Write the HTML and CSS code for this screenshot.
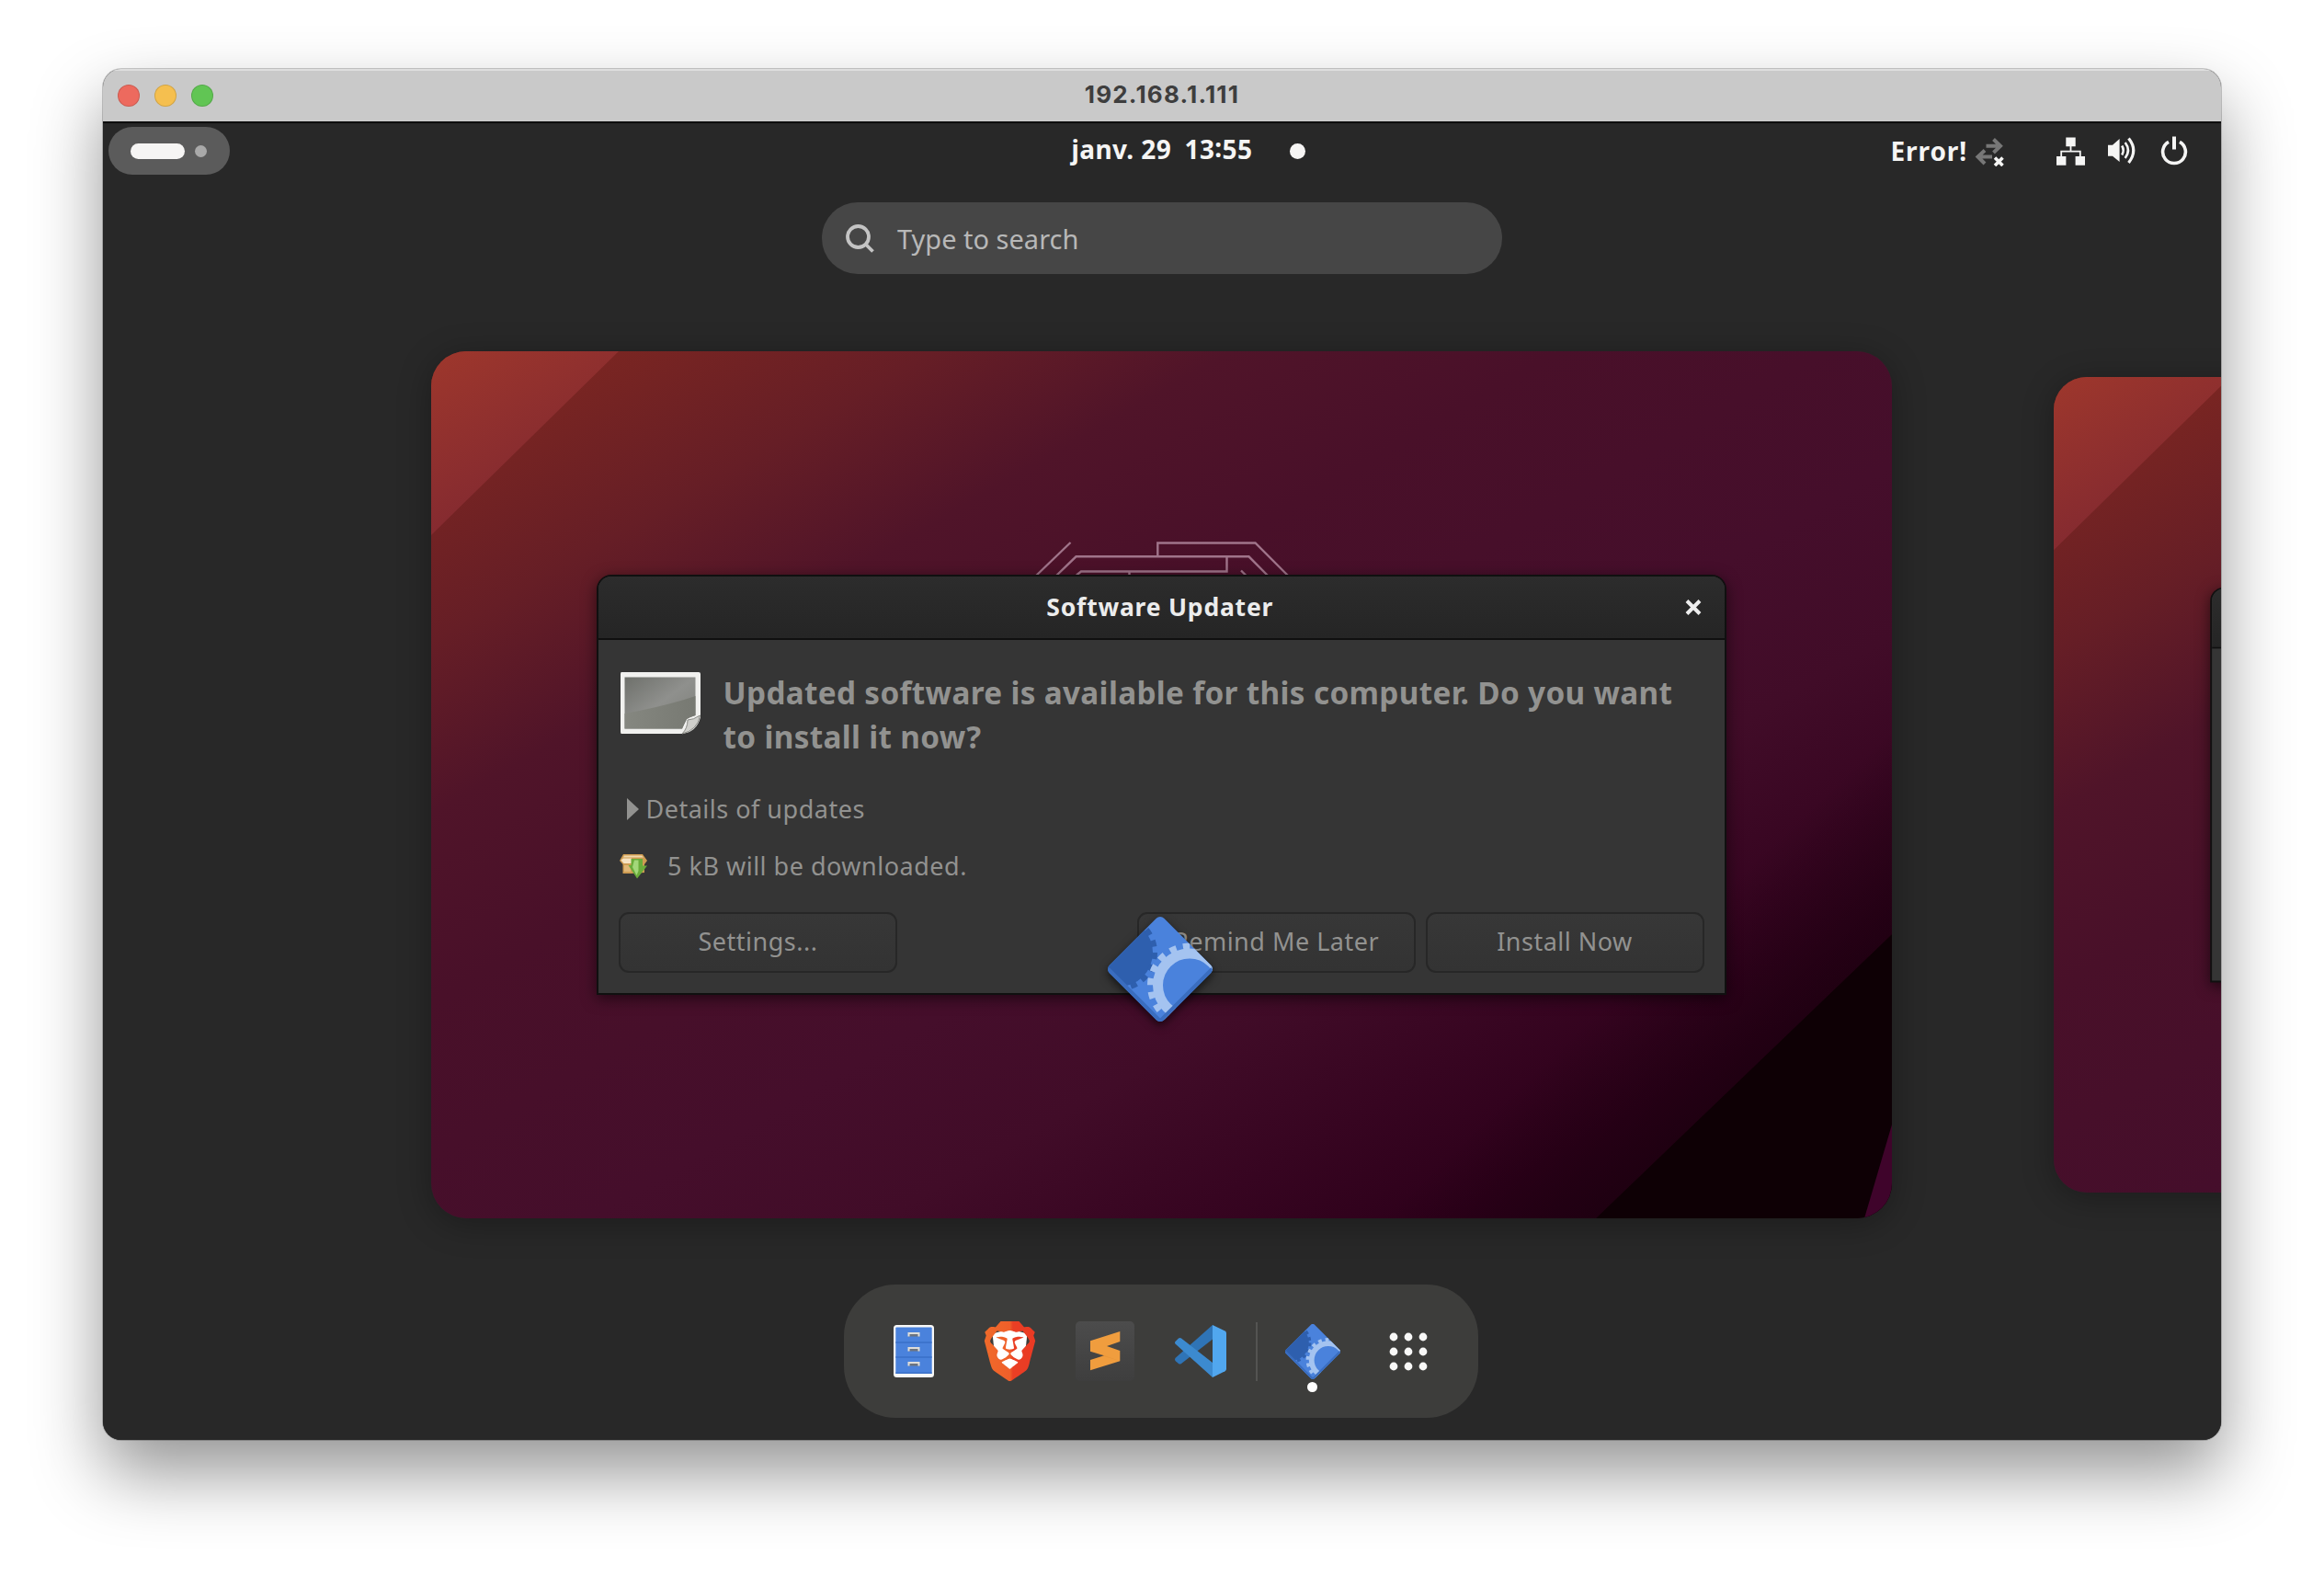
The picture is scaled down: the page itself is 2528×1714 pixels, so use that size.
FILE: index.html
```html
<!DOCTYPE html>
<html lang="fr">
<head>
<meta charset="utf-8">
<title>192.168.1.111</title>
<link rel="stylesheet" href="styles.css">
</head>
<body>
<svg class="defs" width="0" height="0" aria-hidden="true">
  <defs>
    <linearGradient id="wall" gradientUnits="userSpaceOnUse" x1="0" y1="0" x2="805" y2="1395">
      <stop offset="0" stop-color="#83291f"/>
      <stop offset=".065" stop-color="#792522"/>
      <stop offset=".17" stop-color="#661e26"/>
      <stop offset=".27" stop-color="#501429"/>
      <stop offset=".38" stop-color="#491029"/>
      <stop offset=".56" stop-color="#450e2b"/>
      <stop offset=".66" stop-color="#410c28"/>
      <stop offset=".76" stop-color="#370521"/>
      <stop offset=".85" stop-color="#2d001a"/>
      <stop offset="1" stop-color="#1c0010"/>
    </linearGradient>
    <linearGradient id="corner" gradientUnits="userSpaceOnUse" x1="0" y1="0" x2="90" y2="156">
      <stop offset="0" stop-color="#9e372c"/>
      <stop offset="1" stop-color="#842a30"/>
    </linearGradient>
    <linearGradient id="dusk" gradientUnits="userSpaceOnUse" x1="1316" y1="673" x2="1428" y2="790">
      <stop offset="0" stop-color="#1a000e" stop-opacity="0"/>
      <stop offset="1" stop-color="#1a000e" stop-opacity=".65"/>
    </linearGradient>
    <symbol id="wallpaper" viewBox="0 0 1589 943">
      <rect width="1589" height="943" fill="url(#wall)"/>
      <path d="M0 0H204L0 200Z" fill="url(#corner)"/>
      <path d="M1589 380V634L1267 943H1000Z" fill="url(#dusk)"/>
      <path d="M1589 634L1267 943H1589Z" fill="#0e0005"/>
      <path d="M1589 841V943H1559Z" fill="#3f042b"/>
      <g fill="none" stroke="#a0748a" stroke-width="2.4">
        <path d="M656 246L695.500 208"/>
        <path d="M678 246L701.500 223.300H889.500L912 246"/>
        <path d="M790.300 223V208.500H896.500L934 246"/>
        <path d="M702 243.500L707 239.500H865.500V224"/>
        <path d="M759.500 240v4M881 238.500l8 8"/>
      </g>
    </symbol>
    <clipPath id="diamond"><rect x="15" y="15" width="84" height="84" rx="6" transform="rotate(45 57 57)"/></clipPath>
    <symbol id="updater" viewBox="0 0 114 114">
      <g clip-path="url(#diamond)">
        <rect width="114" height="114" fill="#4a82dc"/>
        <circle cx="12" cy="39" r="37" fill="#2e5fae"/>
        <circle cx="12" cy="39" r="39" fill="none" stroke="#2e5fae" stroke-width="6" stroke-dasharray="7 6.600"/>
        <circle cx="89" cy="74.500" r="34.500" fill="none" stroke="#a4c3f0" stroke-width="11"/>
        <circle cx="89" cy="74.500" r="42.500" fill="none" stroke="#a4c3f0" stroke-width="7" stroke-dasharray="7.400 7.430"/>
        <path d="M0 57L57 114L114 57" fill="none" stroke="#3a6dbf" stroke-width="5"/>
      </g>
    </symbol>
  </defs>
</svg>

<div class="window">
  <header class="titlebar">
    <div class="lights"><i class="light red"></i><i class="light yellow"></i><i class="light green"></i></div>
    <span class="host">192.168.1.111</span>
  </header>

  <main class="screen">
    <nav class="panel">
      <div class="activities"><i class="bar"></i><i class="spot"></i></div>
      <div class="clock"><span class="time">janv. 29&ensp;13<span class="colon">:</span>55</span><i class="unread"></i></div>
      <div class="status">
        <span class="error">Error!</span>
        <svg class="ic-sync" width="33" height="33" viewBox="0 0 33 33">
          <g fill="none" stroke="#777" stroke-width="4"><path d="M12.500 10.800H27M20.500 3.500L28 10.800L20.500 18"/><path d="M19 22.500H5M11 15.500L3.500 22.500L11 30"/></g>
          <path d="M22 23.500l8.500 8.500M30.500 23.500L22 32" stroke="#f5f5f4" stroke-width="3.600" fill="none"/>
        </svg>
        <svg class="ic-net" width="31" height="31" viewBox="0 0 31 31">
          <path d="M10.300 .5h10.400v9.800H10.300zM0 21h10.400v9.800H0zM20.600 21H31v9.800H20.600z" fill="#f5f5f4"/>
          <path d="M15.500 10v5M5.200 21v-5.300h20.600V21" fill="none" stroke="#f5f5f4" stroke-width="1.800"/>
        </svg>
        <svg class="ic-vol" width="31" height="31" viewBox="0 0 31 31">
          <path d="M0 8.700h5L12.600 2v25L5 20.700H0z" fill="#f5f5f4"/>
          <g fill="none" stroke="#f5f5f4"><path d="M15.200 9.500q3 5 0 10" stroke-width="2.600"/><path d="M18.700 6q6.500 8.500 0 17" stroke-width="2.600"/><path d="M22.500 1.500q10.500 13 0 26.500" stroke-width="3.200"/></g>
        </svg>
        <svg class="ic-power" width="30" height="32" viewBox="0 0 30 32">
          <path d="M9 6.300A12.400 12.400 0 1 0 21 6.300" fill="none" stroke="#f5f5f4" stroke-width="3.600"/>
          <path d="M15 .5v14" stroke="#f5f5f4" stroke-width="4"/>
        </svg>
      </div>
    </nav>

    <div class="search">
      <svg width="32" height="32" viewBox="0 0 32 32" fill="none" stroke="#c4c4c4" stroke-width="3.800"><circle cx="13.500" cy="13.500" r="11.500"/><path d="M21.500 21.500L29.500 29.500"/></svg>
      <span>Type to search</span>
    </div>

    <section class="workspaces">
      <div class="workspace">
        <svg class="wallpaper" width="1589" height="943"><use href="#wallpaper"/></svg>
        <article class="dialog">
          <header class="dialog-head">
            <span class="dialog-title">Software Updater</span>
            <svg class="close" width="18" height="17" viewBox="0 0 18 17"><path d="M2 1.500L16 15.500M16 1.500L2 15.500" stroke="#eee" stroke-width="4"/></svg>
          </header>
          <div class="dialog-body">
            <div class="lead">
              <svg width="90" height="70" viewBox="0 0 90 70">
                <defs>
                  <linearGradient id="photo" x1="0" y1="0" x2="1" y2="1"><stop offset="0" stop-color="#6e706b"/><stop offset=".5" stop-color="#8f908d"/><stop offset="1" stop-color="#7c7e78"/></linearGradient>
                  <linearGradient id="shade" x1="0" y1="0" x2="1" y2="0"><stop offset="0" stop-color="#858780"/><stop offset="1" stop-color="#777972"/></linearGradient>
                </defs>
                <path d="M2 1H86Q88 1 88 3V50Q84 66 68 68H2Q1 68 1 66V3Q1 1 2 1Z" fill="#f1f1ef"/>
                <path d="M5.500 6.500H82.500V48Q76 50 73 52Q70 58 68 62.500H5.500Z" fill="url(#photo)"/>
                <path d="M5.500 46Q50 38 82.500 27V48Q76 50 73 52Q70 58 68 62.500H5.500Z" fill="url(#shade)"/>
                <path d="M74 53Q80 53 87.500 48Q85 64 68 68Q74 62 74 53Z" fill="#cfcfcb" stroke="#8a8b86" stroke-width="1"/>
              </svg>
              <h1>Updated software is available for this computer. Do you want<br>to install it now?</h1>
            </div>
            <div class="details"><i class="arrow"></i><span>Details of updates</span></div>
            <div class="download">
              <svg width="32" height="28" viewBox="0 0 32 28">
                <path d="M5 1H26L31 8L28 12V21L14 22H4.500V12L1 8Z" fill="#cf9c52"/>
                <path d="M6 2.500H25L27 4.500H5Z" fill="#f0d7ac"/><path d="M2.500 7.500L5 5.500H14V11H5.500Z" fill="#f5e2c2"/><path d="M6 13H13V20H6Z" fill="#dfb676"/>
                <path d="M13.500 6H26V13.500H31L20 27.500L10.500 13H13.500Z" fill="#6aac3b"/><path d="M17 7.500H21.500V19L19.500 24L15 15Z" fill="#a3d77a"/>
              </svg>
              <span>5 kB will be downloaded.</span>
            </div>
            <div class="actions">
              <button>Settings...</button>
              <span class="grow"></span>
              <button>Remind Me Later</button>
              <button>Install Now</button>
            </div>
          </div>
        </article>
        <svg class="app-badge" width="114" height="114"><use href="#updater"/></svg>
      </div>
      <div class="workspace next">
        <svg class="wallpaper" width="1589" height="943"><use href="#wallpaper"/></svg>
        <article class="dialog"><header class="dialog-head"></header></article>
      </div>
    </section>

    <footer class="dock">
      <div class="app">
        <svg width="44" height="57" viewBox="0 0 44 57">
          <rect width="44" height="57" rx="3.500" fill="#f8f8f7"/>
          <rect x="2.300" y="2.500" width="39.400" height="50.500" rx="1" fill="#4a82dc"/>
          <path d="M2.300 19h39.400M2.300 35h39.400M2.300 52.300h39.400" stroke="#3a70c8" stroke-width="1.500"/>
          <path d="M16 8.500H28V12.500H16ZM16 24.500H28V28.500H16ZM16 40.500H28V44.500H16Z" fill="#6c7480"/>
          <path d="M16.500 12.500V9H27.500V12.500M16.500 28.500V25H27.500V28.500M16.500 44.500V41H27.500V44.500" fill="none" stroke="#deddda" stroke-width="2"/>
        </svg>
      </div>
      <div class="app">
        <svg width="65" height="65" viewBox="0 0 24 24">
          <defs><linearGradient id="lion"><stop offset="0" stop-color="#f06a2a"/><stop offset=".5" stop-color="#ef5f2a"/><stop offset=".56" stop-color="#ea3f24"/><stop offset="1" stop-color="#ea3a24"/></linearGradient></defs>
          <path d="M5 5L12 3L19 5L18 14L12 20L6 14Z" fill="#fff"/>
          <path fill="url(#lion)" d="M15.680 0l2.096 2.380s1.840-.512 2.709.358c.868.870 1.584 1.638 1.584 1.638l-.562 1.381.715 2.047s-2.104 7.980-2.350 8.955c-.486 1.919-.818 2.660-2.198 3.633-1.380.972-3.884 2.660-4.293 2.916-.409.256-.920.692-1.380.692-.460 0-.970-.436-1.380-.692a185.796 185.796 0 01-4.293-2.916c-1.380-.973-1.712-1.714-2.197-3.633-.247-.975-2.351-8.955-2.351-8.955l.715-2.047-.562-1.381s.716-.768 1.585-1.638c.868-.870 2.708-.358 2.708-.358L8.321 0h7.360zm-3.679 14.936c-.140 0-1.038.317-1.758.690-.720.373-1.242.637-1.409.742-.167.104-.065.301.087.409.152.107 2.194 1.690 2.393 1.866.198.175.489.464.687.464.198 0 .490-.290.688-.464.198-.175 2.240-1.759 2.392-1.866.152-.108.254-.305.087-.410-.167-.104-.689-.368-1.410-.741-.720-.373-1.617-.690-1.757-.690zm0-11.278s-.409.001-1.022.206-1.278.460-1.584.460c-.307 0-2.581-.434-2.581-.434S4.119 7.152 4.119 7.849c0 .697.339.881.680 1.243l2.020 2.149c.192.203.590.511.356 1.066-.235.555-.580 1.260-.196 1.977.384.716 1.042 1.194 1.464 1.115.421-.080 1.412-.598 1.776-.834.364-.237 1.518-1.190 1.518-1.554 0-.365-1.193-1.020-1.413-1.168-.220-.150-1.226-.725-1.247-.950-.020-.227-.012-.293.284-.851.297-.559.831-1.304.742-1.800-.089-.495-.950-.753-1.565-.986-.615-.232-1.799-.671-1.947-.740-.148-.068-.110-.133.339-.175.448-.043 1.719-.212 2.292-.052.573.160 1.552.403 1.632.532.079.130.149.134.067.579-.081.445-.500 2.581-.541 2.960-.040.380-.120.630.288.724.409.094 1.097.256 1.333.256s.924-.162 1.333-.256c.408-.093.329-.344.288-.723-.040-.380-.460-2.516-.541-2.961-.082-.445-.012-.450.067-.579.080-.129 1.059-.372 1.632-.532.573-.160 1.845.009 2.292.052.449.042.487.107.339.175-.148.069-1.332.508-1.947.740-.615.233-1.476.490-1.565.986-.090.496.445 1.241.742 1.800.297.558.304.624.284.850-.020.226-1.026.802-1.247.950-.220.150-1.413.804-1.413 1.169 0 .364 1.154 1.317 1.518 1.554.364.236 1.355.755 1.776.834.422.079 1.080-.400 1.464-1.115.384-.716.039-1.422-.195-1.977-.235-.555.163-.863.355-1.066l2.020-2.149c.341-.362.680-.546.680-1.243 0-.697-2.695-3.960-2.695-3.960s-2.274.436-2.580.436c-.307 0-.972-.256-1.585-.461-.613-.205-1.022-.206-1.022-.206z"/>
        </svg>
      </div>
      <div class="app">
        <svg width="64" height="65" viewBox="0 0 64 65">
          <defs><linearGradient id="slate" x2="0" y2="1"><stop offset="0" stop-color="#4c4c4c"/><stop offset="1" stop-color="#3e3e3e"/></linearGradient></defs>
          <rect width="64" height="65" rx="5" fill="url(#slate)"/>
          <path d="M48.300 11V22L34 27L48.300 32V43.300L16 53.300V42L31 37.300L16 32.700V21.300Z" fill="#f09d3e"/>
          <path d="M31 37.300L48.300 43.300L22 35Z" fill="#d98730" opacity=".6"/>
        </svg>
      </div>
      <div class="app">
        <svg width="56" height="57" viewBox="0 0 56 57">
          <path d="M41 0L1 35.500Q-1 37.500 1 39.500L4 42Q5.500 43 7 42L41 15.500Z" fill="#2f74b6"/>
          <path d="M41 57L1 21Q-1 19 1 17.500L4 14.500Q5.500 13.500 7 14.500L41 41Z" fill="#3c8acf"/>
          <path d="M41 0L54.500 6.500Q56 7.300 56 9V48Q56 49.500 54.500 50.300L41 57Z" fill="#51a7ef"/>
        </svg>
      </div>
      <i class="divider"></i>
      <div class="app running"><svg width="60" height="60"><use href="#updater"/></svg></div>
      <div class="app">
        <svg width="42" height="42" viewBox="0 0 42 42" fill="#f8f8f7">
          <circle cx="5" cy="5" r="4.400"/><circle cx="21" cy="5" r="4.400"/><circle cx="37" cy="5" r="4.400"/>
          <circle cx="5" cy="21" r="4.400"/><circle cx="21" cy="21" r="4.400"/><circle cx="37" cy="21" r="4.400"/>
          <circle cx="5" cy="37" r="4.400"/><circle cx="21" cy="37" r="4.400"/><circle cx="37" cy="37" r="4.400"/>
        </svg>
      </div>
    </footer>
  </main>
</div>
</body>
</html>
```
FILE: styles.css
```css
* { box-sizing: border-box; }

body {
  margin: 0;
  width: 2528px;
  height: 1714px;
  overflow: hidden;
  background: #fff;
  font-family: "Noto Sans", sans-serif;
}

.defs { position: absolute; }
svg { display: block; flex: none; }
span, h1 { white-space: nowrap; }

.window {
  width: 2304px;
  height: 1491px;
  margin: 75px 112px 0;
  border-radius: 20px;
  overflow: hidden;
  background: #282828;
  box-shadow: 0 0 0 1px rgba(0, 0, 0, .2), 0 36px 76px rgba(0, 0, 0, .42);
}

.titlebar {
  height: 57px;
  padding: 1px 16px 0;
  display: grid;
  grid-template-columns: 1fr auto 1fr;
  align-items: center;
  background: #c9c9c9;
  box-shadow: inset 0 2px 0 #dedede;
}

.lights { display: flex; gap: 16px; }
.light { width: 24px; height: 24px; border-radius: 50%; border: 1px solid rgba(0, 0, 0, .14); }
.red { background: #ed6a5e; }
.yellow { background: #f5bf4f; }
.green { background: #61c554; }

.host {
  margin-top: -3px;
  font: 700 26px/30px Inter, sans-serif;
  letter-spacing: 1.2px;
  color: #3e3e3e;
}

.screen {
  height: 1434px;
  display: flex;
  flex-direction: column;
  align-items: center;
  background: #282828;
  box-shadow: inset 0 2px 1px #0c0c0c;
}

.panel {
  width: 100%;
  height: 58px;
  padding: 6px 36px 0 6px;
  display: grid;
  grid-template-columns: 1fr auto 1fr;
  color: #f5f5f4;
  font-size: 28px;
  font-weight: 700;
  line-height: 52px;
}

.activities {
  width: 132px;
  height: 52px;
  padding-left: 24px;
  border-radius: 26px;
  display: flex;
  align-items: center;
  gap: 11px;
  background: #5b5b5b;
}
.bar { width: 59px; height: 17px; border-radius: 9px; background: #f6f5f4; }
.spot { width: 13px; height: 13px; border-radius: 50%; background: #a9a9a9; }

.clock { display: flex; align-items: center; gap: 41px; padding-left: 88px; }
.time { margin-top: -5px; letter-spacing: .4px; }
.colon { position: relative; top: -2px; }
.unread { width: 17px; height: 17px; border-radius: 50%; background: #f6f5f4; }

.status { display: flex; justify-content: flex-end; align-items: center; }
.error { letter-spacing: .9px; }
.ic-sync { margin-left: 8px; }
.ic-net { margin-left: 56px; }
.ic-vol { margin-left: 25px; }
.ic-power { margin-left: 26px; }

.search {
  width: 740px;
  height: 78px;
  margin-top: 30px;
  padding-left: 26px;
  border-radius: 39px;
  display: flex;
  flex: none;
  align-items: center;
  gap: 24px;
  background: #464646;
  color: #b8b8b8;
  font-size: 29px;
}
.search svg { margin-top: 1px; }

.workspaces {
  width: 100%;
  height: 943px;
  margin-top: 84px;
  padding-left: 356.500px;
  display: flex;
  flex: none;
  align-items: center;
  gap: 176px;
}

.workspace {
  position: relative;
  flex: none;
  width: 1589px;
  height: 943px;
  border-radius: 38px;
  box-shadow: 0 6px 36px rgba(0, 0, 0, .3);
}
.next { transform: scale(.9405); transform-origin: left center; }
.wallpaper { border-radius: 38px; }

.dialog {
  position: absolute;
  left: 180.500px;
  top: 243px;
  width: 1228.500px;
  height: 457px;
  border: 2px solid #101010;
  border-radius: 16px 16px 0 0;
  overflow: hidden;
  background: #353535;
  box-shadow: 0 4px 16px rgba(0, 0, 0, .55);
}

.dialog-head {
  height: 69px;
  padding: 0 25px;
  display: grid;
  grid-template-columns: 1fr auto 1fr;
  align-items: center;
  border-bottom: 2px solid #101010;
  background: linear-gradient(#2c2c2c, #252525);
  color: #ececec;
}
.dialog-title {
  grid-column: 2;
  margin: -2px 3px 0 0;
  font-size: 26.500px;
  font-weight: 700;
  letter-spacing: .8px;
}
.close { justify-self: end; }

.dialog-body {
  padding: 34px 22px 0;
  font-size: 27px;
  line-height: 40px;
  letter-spacing: .5px;
  color: #929290;
}

.lead { display: flex; gap: 22.500px; }
.lead svg { margin-left: 1px; }
.lead h1 { margin: 0; font-size: 33.300px; line-height: 47.700px; letter-spacing: .33px; }

.details { display: flex; align-items: center; gap: 7.500px; margin-top: 34.500px; padding-left: 9px; }
.arrow { border-left: 13px solid #929290; border-top: 12px solid transparent; border-bottom: 12px solid transparent; }

.download { display: flex; align-items: center; gap: 21px; margin-top: 22.500px; }

.actions { display: flex; gap: 11px; margin-top: 29.500px; }
.grow { flex: 1; }
.actions button {
  width: 303px;
  height: 66px;
  padding: 0 0 2px;
  border: 2px solid #272727;
  border-radius: 11px;
  background: linear-gradient(#373737, #333);
  color: inherit;
  font: inherit;
  letter-spacing: inherit;
}

.app-badge {
  position: absolute;
  left: 736px;
  top: 615px;
  overflow: visible;
  filter: drop-shadow(0 4px 5px rgba(0, 0, 0, .6));
}

.dock {
  width: 690px;
  height: 145px;
  margin: 72px 2px 0 0;
  padding: 0 24px;
  border-radius: 56px;
  display: flex;
  flex: none;
  align-items: center;
  background: #3d3d3b;
}
.app { width: 104px; flex: none; display: flex; justify-content: center; position: relative; }
.divider { width: 2px; height: 64px; margin: 0 8px; background: #545452; }
.running::after {
  content: "";
  position: absolute;
  left: 46px;
  top: 63.500px;
  width: 11px;
  height: 11px;
  border-radius: 50%;
  background: #fff;
}
```
